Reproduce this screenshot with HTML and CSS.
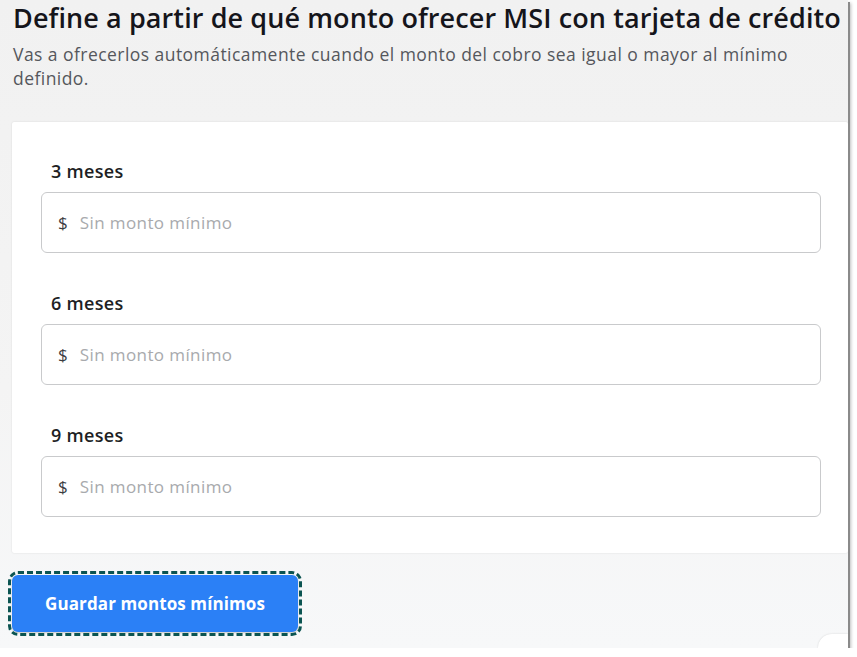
FILE: index.html
```html
<!DOCTYPE html>
<html lang="es">
<head>
<meta charset="utf-8">
<title>Montos mínimos MSI</title>
<link rel="stylesheet" href="styles.css">
</head>
<body>
<div class="frame">
  <header class="head">
    <h1 class="title">Define a partir de qué monto ofrecer MSI con tarjeta de crédito</h1>
    <p class="sub">Vas a ofrecerlos automáticamente cuando el monto del cobro sea igual o mayor al mínimo definido.</p>
  </header>
  <section class="card">
    <div class="group">
      <label class="label">3 meses</label>
      <div class="field"><span class="cur">$</span><span class="ph">Sin monto mínimo</span></div>
    </div>
    <div class="group">
      <label class="label">6 meses</label>
      <div class="field"><span class="cur">$</span><span class="ph">Sin monto mínimo</span></div>
    </div>
    <div class="group">
      <label class="label">9 meses</label>
      <div class="field"><span class="cur">$</span><span class="ph">Sin monto mínimo</span></div>
    </div>
  </section>
  <div class="actions">
    <button class="btn">Guardar montos mínimos</button>
  </div>
  <div class="corner"></div>
</div>
</body>
</html>
```

FILE: styles.css
```css
html, body { margin: 0; padding: 0; background: #fff; }
body { font-family: "Open Sans", "Lato", sans-serif; }
.frame {
  position: relative;
  width: 848px;
  height: 648px;
  background: linear-gradient(180deg, #f1f1f1 0%, #f4f4f4 60%, #f7f8f9 100%);
  box-shadow: 2px 2px 0 #8a8a8a, 3px 3px 3px rgba(0,0,0,0.25);
  overflow: hidden;
}
.head { padding: 1px 0 0 13px; }
.title {
  margin: 0;
  font-size: 27px;
  font-weight: 600;
  color: #15151b;
  line-height: 34px;
  letter-spacing: 0.1px;
  white-space: nowrap;
}
.sub {
  margin: 7px 0 0;
  font-size: 17.5px;
  line-height: 24px;
  color: #55575c;
  width: 800px;
  letter-spacing: 0.45px;
}
.card {
  margin: 32px 0 0 12px;
  background: #fff;
  padding: 38px 27px 36px 29px;
  box-shadow: 0 0 2px rgba(0,0,0,0.12);
  border-radius: 2px;
  display: flex;
  flex-direction: column;
  gap: 39px;
}
.group { display: flex; flex-direction: column; gap: 10px; }
.label {
  padding-left: 10px;
  font-size: 18px;
  font-weight: 600;
  color: #1e1f24;
  line-height: 22px;
  letter-spacing: 0.3px;
}
.field {
  height: 59px;
  border: 1px solid #c9cacc;
  border-radius: 6px;
  display: flex;
  align-items: center;
  padding-left: 16px;
  gap: 12px;
}
.cur { font-size: 17px; color: #3c3d42; }
.ph { font-size: 17px; color: #a8aaad; letter-spacing: 0.4px; }
.actions { margin: 22px 0 0 12px; }
.btn {
  width: 286px;
  height: 57px;
  background: #2b80f6;
  color: #fff;
  border: none;
  border-radius: 6px;
  font-family: "Open Sans", sans-serif;
  font-size: 17px;
  font-weight: 700;
  letter-spacing: 0.1px;
  outline: 3px dashed #0b5451;
  outline-offset: 1px;
  box-shadow: 0 1px 2px rgba(0,0,0,0.2);
}
.corner {
  position: absolute;
  right: 0;
  bottom: 0;
  width: 30px;
  height: 14px;
  background: #fff;
  border-top-left-radius: 14px;
  box-shadow: 0 0 2px rgba(0,0,0,0.15);
}
```
